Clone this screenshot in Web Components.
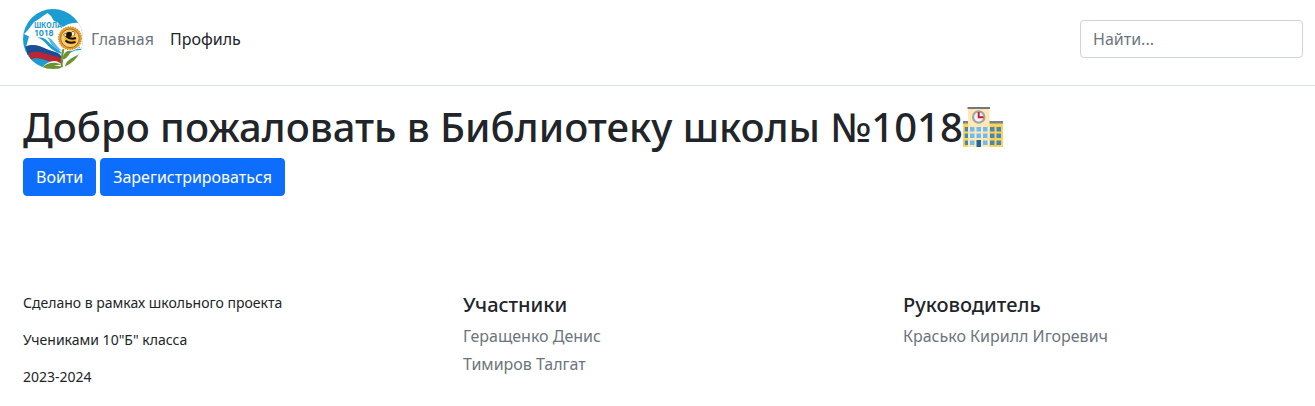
<!DOCTYPE html>
<html lang="ru">
<head>
<meta charset="utf-8">
<title>Библиотека школы №1018</title>
<style>
body{margin:0;background:#fff;color:#212529;font:400 16px/1.5 "Noto Sans","Liberation Sans",sans-serif}
</style>
</head>
<body>
<site-header></site-header>
<welcome-block></welcome-block>
<site-footer>
  <p slot="about">Сделано в рамках школьного проекта</p>
  <p slot="about">Учениками 10"Б" класса</p>
  <p slot="about">2023-2024</p>
  <footer-list heading="Участники"><li>Геращенко Денис</li><li>Тимиров Талгат</li></footer-list>
  <footer-list heading="Руководитель"><li>Красько Кирилл Игоревич</li></footer-list>
</site-footer>
<script>
function define(name, html){
  customElements.define(name, class extends HTMLElement{
    constructor(){
      super();
      this.attachShadow({mode:'open'}).innerHTML = html;
    }
    connectedCallback(){
      const h = this.shadowRoot.querySelector('[data-heading]');
      if (h) h.textContent = this.getAttribute('heading');
    }
  });
}

define('school-logo', `
<style>:host{display:block;width:60px;height:60px}svg{display:block}text{font:700 7.6px Inter,"Noto Sans",sans-serif;fill:#1493cc}</style>
<svg width="60" height="60" viewBox="0 0 60 60">
  <defs><clipPath id="c"><circle cx="30" cy="30" r="30"/></clipPath></defs>
  <g clip-path="url(#c)">
    <rect width="60" height="60" fill="#1b9dd2"/>
    <path d="M1 25 L5 21 L11 13 L16 10 L20 7 L24.500 4 L28 7 L31 12 L36 14 L40 18 Q47 12.500 60 14 V46 L46 47 L40 52 C36 43 25 41 18 38 C12 35 7 37 3 38 L6 27.500 Z" fill="#fff"/>
    <path d="M14 28.500 C20 28 23 30 26 33.500 C30 38 34 39 40 45 C31 43 27 39 23 34.500 C20 31 17 29.500 14 28.500 Z" fill="#1b9dd2"/>
    <path d="M24 28 C31 30 32 37 39.500 42 C33 41 29 37 27 33 C26 31 25.500 29.500 24 28 Z" fill="#58b8df"/>
    <path d="M2.500 37.500 C14 33 21 40 29 42 C34 43 37 44.500 39.500 49 L38 50.500 C26 49 16 42 4.500 46 Z" fill="#1d4d95"/>
    <path d="M5.500 44.800 C15 40 23 45.500 31 47 C35 48 37.500 48 39.500 50.500 L39 54 C25 55 18 46 7.500 50.500 Z" fill="#b92732"/>
    <path d="M40 52 C44 43 51 39 60 40 V60 H38 Z" fill="#fff"/>
    <path d="M41 50 C45 43 52 40 59 40.500 M41 47 C46 42 51 40 57 38" fill="none" stroke="#1b9dd2" stroke-width="1.200"/>
    <path d="M18 59 C25 52 32 50 37 54 C42 58 50 53 56 49 L52 60 H18 Z" fill="#fff"/>
    <path d="M19 58.500 C24 53.500 32 52.500 38 55.500 L31 56.500 L39 57.500 L37 60 H22 Z M42 58.500 C42 52 48 49 59 44 C58 54 52 59 45 59.500 C50 56 51 54 52 51.500 C49 55 46 56 42 58.500 Z" fill="#6d922e"/>
    <path d="M39 58 C37.500 51 39 48 40.500 40" fill="none" stroke="#6d922e" stroke-width="2"/>
    <path d="M40 50.500 C39.500 45 42.500 42 47.500 41.500 C46.500 46.500 44 49 40 50.500" fill="#6d922e"/>
  </g>
  <circle cx="47" cy="29.300" r="12.600" fill="#fff"/>
  <circle cx="47" cy="29.300" r="11.300" fill="#e9a02c" stroke="#dc9227" stroke-width="1.400" stroke-dasharray="1.500 .9"/>
  <circle cx="47" cy="29.300" r="9.300" fill="#f9cc70" stroke="#a96b20" stroke-width="1"/>
  <path d="M46 28 C38 28 40 22 46 26 M48 26 C48 20 55 22 50 28" fill="#fff3cf" stroke="#30200f" stroke-width=".6"/>
  <ellipse cx="47.300" cy="30.500" rx="6.200" ry="4.800" transform="rotate(25 47.300 30.500)" fill="#efb32d"/>
  <path d="M43 27 Q47 31 53 29 M42.500 31.500 Q46 35 52.500 33" fill="none" stroke="#17120f" stroke-width="2"/>
  <circle cx="46" cy="25.500" r="2.800" fill="#17120f"/>
  <text x="11.200" y="19" textLength="28" lengthAdjust="spacing" style="font-size:6.900px">ШКОЛА</text>
  <text x="11.800" y="27.200" textLength="18.600" lengthAdjust="spacing">1018</text>
</svg>`);

define('site-header', `
<style>
:host{display:flex;box-sizing:border-box;height:86px;border-bottom:1px solid #dee2e6;padding:9px 12px 16px 23px;justify-content:space-between;align-items:flex-start}
nav{display:flex;align-items:center}
a{padding:8px;text-decoration:none;color:#212529}
a.active{color:#6c757d}
input{box-sizing:border-box;width:223px;height:38px;margin:11px 0 0;padding:6px 12px;border:1px solid #ced4da;border-radius:4px;font:inherit;color:#212529;background:#fff}
input::placeholder{color:#6c757d;opacity:1}
</style>
<nav><school-logo></school-logo><a class="active">Главная</a><a>Профиль</a></nav>
<input type="search" placeholder="Найти...">`);

define('school-icon', `
<style>:host{display:inline-block;width:40px;height:40px;vertical-align:-5px}svg{display:block}</style>
<svg width="40" height="40" viewBox="0 0 40 40" role="img">
  <path d="M0 16H5V40H0ZM26 16H40V40H26Z" fill="#ffd352"/>
  <path d="M0 14H5V16.500H0ZM26 14H40V16.500H26Z" fill="#78828a"/>
  <path d="M5 2H26.500V40H5Z" fill="#ffe8b5"/><path d="M4.500 0H27V2H4.500Z" fill="#78757a"/>
  <circle cx="15.700" cy="10" r="5.700" fill="#f3f3f3" stroke="#a5a5a5" stroke-width="2.200"/>
  <path d="M15.700 5V10.300H20.500" fill="none" stroke="#c11f37" stroke-width="1.900"/>
  <path d="M7 20h4.500v4.500H7zM13.500 20H18v4.500h-4.500zM20 20h4.500v4.500H20zM7 26.500h4.500V31H7zM13.500 26.500H18V31h-4.500zM20 26.500h4.500V31H20zM7 33.500h4.500V38H7zM20 33.500h4.500V38H20z" fill="#6cbcf3"/>
  <path d="M1.800 20H5v4.500H1.800zM1.800 26.500H5V31H1.800zM1.800 33.500H5V38H1.800zM27 20h4.500v4.500H27zM33.500 20H38v4.500h-4.500zM27 26.500h4.500V31H27zM33.500 26.500H38V31h-4.500zM27 33.500h4.500V38H27zM33.500 33.500H38V38h-4.500z" fill="#4388bd"/>
  <path d="M13.500 33h4.500v7h-4.500z" fill="#226399"/>
</svg>`);

define('action-button', `
<style>
:host{display:block}
button{display:block;box-sizing:border-box;height:38px;margin:0;padding:6px 12px;border:1px solid #0d6efd;border-radius:4px;background:#0d6efd;color:#fff;font:inherit;white-space:nowrap}
</style><button><slot></slot></button>`);

define('welcome-block', `
<style>
:host{display:block;padding:17px 23px 0}
h1{margin:0 0 7px;height:48px;font-size:40px;font-weight:500;line-height:48px;white-space:nowrap}
div{display:flex;gap:4px}
</style>
<h1>Добро пожаловать в Библиотеку школы №1018<school-icon></school-icon></h1>
<div><action-button>Войти</action-button><action-button>Зарегистрироваться</action-button></div>`);

define('footer-list', `
<style>
:host{display:block}
h5{margin:0 0 7px;font-size:20px;font-weight:500;line-height:24px}
ul{list-style:none;margin:0;padding:0;display:grid;gap:4px;color:#6c757d}
::slotted(li){display:block}
</style><h5 data-heading></h5><ul><slot></slot></ul>`);

define('site-footer', `
<style>
:host{display:grid;grid-template-columns:repeat(3,440px);padding:96px 0 0 23px}
::slotted(p){margin:0 0 16px;font-size:14px;line-height:21px}
::slotted(footer-list){margin-top:1px}
</style>
<div><slot name="about"></slot></div><slot></slot>`);
</script>
</body>
</html>
